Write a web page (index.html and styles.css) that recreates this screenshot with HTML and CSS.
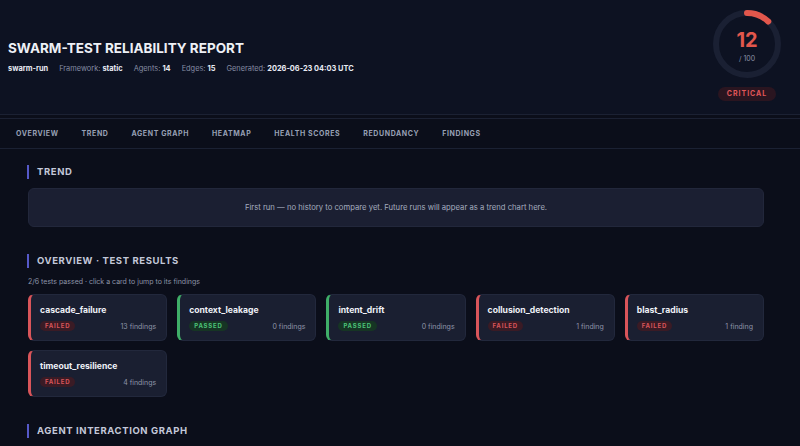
FILE: index.html
```html
<!DOCTYPE html>
<html lang="en">
<head>
<meta charset="utf-8">
<title>Swarm-Test Reliability Report</title>
<link rel="stylesheet" href="styles.css">
</head>
<body>
<header class="header">
  <div class="header-info">
    <h1 class="title">SWARM-TEST RELIABILITY REPORT</h1>
    <div class="meta">
      <span class="meta-run">swarm-run</span>
      <span class="meta-item">Framework: <b>static</b></span>
      <span class="meta-item">Agents: <b>14</b></span>
      <span class="meta-item">Edges: <b>15</b></span>
      <span class="meta-item">Generated: <b>2026-06-23 04:03 UTC</b></span>
    </div>
  </div>
  <div class="score">
    <div class="gauge">
      <svg class="gauge-svg" width="72" height="72" viewBox="0 0 72 72">
        <circle cx="36" cy="36" r="31" fill="none" stroke="#1a2033" stroke-width="6"/>
        <circle cx="36" cy="36" r="31" fill="none" stroke="#e2574c" stroke-width="6" stroke-linecap="round" stroke-dasharray="23.4 200" transform="rotate(-90 36 36)"/>
      </svg>
      <div class="gauge-text">
        <div class="gauge-value">12</div>
        <div class="gauge-max">/ 100</div>
      </div>
    </div>
    <div class="level">CRITICAL</div>
  </div>
</header>
<nav class="nav">
  <a class="nav-link">OVERVIEW</a>
  <a class="nav-link">TREND</a>
  <a class="nav-link">AGENT GRAPH</a>
  <a class="nav-link">HEATMAP</a>
  <a class="nav-link">HEALTH SCORES</a>
  <a class="nav-link">REDUNDANCY</a>
  <a class="nav-link">FINDINGS</a>
</nav>
<main class="main">
  <section class="section">
    <h2 class="section-title">TREND</h2>
    <div class="trend-box">First run — no history to compare yet. Future runs will appear as a trend chart here.</div>
  </section>
  <section class="section">
    <h2 class="section-title">OVERVIEW · TEST RESULTS</h2>
    <p class="subtitle">2/6 tests passed · click a card to jump to its findings</p>
    <div class="cards">
      <div class="card card-fail">
        <div class="card-name">cascade_failure</div>
        <div class="card-row"><span class="badge badge-fail">FAILED</span><span class="card-count">13 findings</span></div>
      </div>
      <div class="card card-pass">
        <div class="card-name">context_leakage</div>
        <div class="card-row"><span class="badge badge-pass">PASSED</span><span class="card-count">0 findings</span></div>
      </div>
      <div class="card card-pass">
        <div class="card-name">intent_drift</div>
        <div class="card-row"><span class="badge badge-pass">PASSED</span><span class="card-count">0 findings</span></div>
      </div>
      <div class="card card-fail">
        <div class="card-name">collusion_detection</div>
        <div class="card-row"><span class="badge badge-fail">FAILED</span><span class="card-count">1 finding</span></div>
      </div>
      <div class="card card-fail">
        <div class="card-name">blast_radius</div>
        <div class="card-row"><span class="badge badge-fail">FAILED</span><span class="card-count">1 finding</span></div>
      </div>
      <div class="card card-fail">
        <div class="card-name">timeout_resilience</div>
        <div class="card-row"><span class="badge badge-fail">FAILED</span><span class="card-count">4 findings</span></div>
      </div>
    </div>
  </section>
  <section class="section">
    <h2 class="section-title">AGENT INTERACTION GRAPH</h2>
  </section>
</main>
</body>
</html>
```
FILE: styles.css
```css
* { box-sizing: border-box; }
html, body { margin: 0; padding: 0; }
body {
  background: #0b0e1a;
  color: #e6e9f2;
  font-family: Inter, "Noto Sans", "Liberation Sans", sans-serif;
  overflow: hidden;
}
.header {
  display: flex;
  justify-content: space-between;
  align-items: center;
  padding: 8px 17px 13px 8px;
  background: #0d1222;
  border-bottom: 1px solid #1b2133;
}
.header-info { padding-top: 3px; }
.title {
  margin: 0;
  font-size: 13.5px;
  font-weight: 700;
  letter-spacing: 0;
  line-height: 18px;
  color: #eef0f6;
}
.meta {
  display: flex;
  gap: 11px;
  margin-top: 7px;
  font-size: 7.4px;
  line-height: 10px;
  color: #858ca2;
}
.meta b, .meta-run { color: #e8ebf3; font-weight: 700; }
.score {
  display: flex;
  flex-direction: column;
  align-items: center;
  width: 72px;
}
.gauge { position: relative; width: 72px; height: 72px; }
.gauge-svg { display: block; }
.gauge-text {
  position: absolute;
  inset: 0;
  display: flex;
  flex-direction: column;
  align-items: center;
  justify-content: center;
  padding-top: 4px;
}
.gauge-value {
  font-size: 20px;
  font-weight: 700;
  color: #e2574c;
  line-height: 22px;
}
.gauge-max {
  font-size: 7px;
  color: #8a91a6;
  margin-top: 3px;
  line-height: 9px;
}
.level {
  margin-top: 7px;
  padding: 3px 9px;
  border-radius: 8px;
  background: #2a1520;
  color: #e0575a;
  font-size: 7px;
  font-weight: 700;
  letter-spacing: 1px;
  line-height: 8px;
}
.nav {
  display: flex;
  align-items: center;
  gap: 23px;
  height: 31px;
  padding: 0 16px;
  margin-top: 3px;
  border-top: 1px solid #1b2133;
  border-bottom: 1px solid #1b2133;
  background: #0b0e1a;
}
.nav-link {
  font-size: 7px;
  font-weight: 700;
  letter-spacing: 0.6px;
  color: #98a0b5;
}
.main { padding: 16px 36px 0 28px; }
.section-title {
  margin: 0 0 0 -1px;
  border-left: 2px solid #5659c9;
  padding-left: 8px;
  font-size: 9.5px;
  font-weight: 700;
  letter-spacing: 0.6px;
  line-height: 14px;
  color: #c3c8d9;
}
.trend-box {
  margin-top: 9px;
  margin-bottom: 27px;
  height: 39px;
  display: flex;
  align-items: center;
  justify-content: center;
  background: #1b1f32;
  border: 1px solid #22273b;
  border-radius: 6px;
  font-size: 7.7px;
  color: #a4abbe;
}
.subtitle {
  margin: 9px 0 0;
  font-size: 7px;
  line-height: 10px;
  color: #8d94a8;
}
.cards {
  margin-top: 7px;
  margin-bottom: 27px;
  display: grid;
  grid-template-columns: repeat(5, 1fr);
  gap: 9px 10px;
}
.card {
  height: 47px;
  padding: 9px 10px 0 9px;
  background: #1a1f31;
  border: 1px solid #22283c;
  border-left-width: 3px;
  border-radius: 6px;
}
.card-fail { border-left-color: #d9555a; }
.card-pass { border-left-color: #3fae68; }
.card-name {
  font-size: 8.6px;
  font-weight: 700;
  line-height: 12px;
  color: #eef0f6;
}
.card-row {
  display: flex;
  justify-content: space-between;
  align-items: center;
  margin-top: 5px;
}
.badge {
  padding: 1px 5px;
  border-radius: 6px;
  font-size: 6px;
  font-weight: 700;
  letter-spacing: 0.8px;
  line-height: 8px;
}
.badge-fail { background: #3a1b25; color: #d9555a; }
.badge-pass { background: #163524; color: #4cc27a; }
.card-count {
  font-size: 7px;
  color: #8e95a9;
}
```
